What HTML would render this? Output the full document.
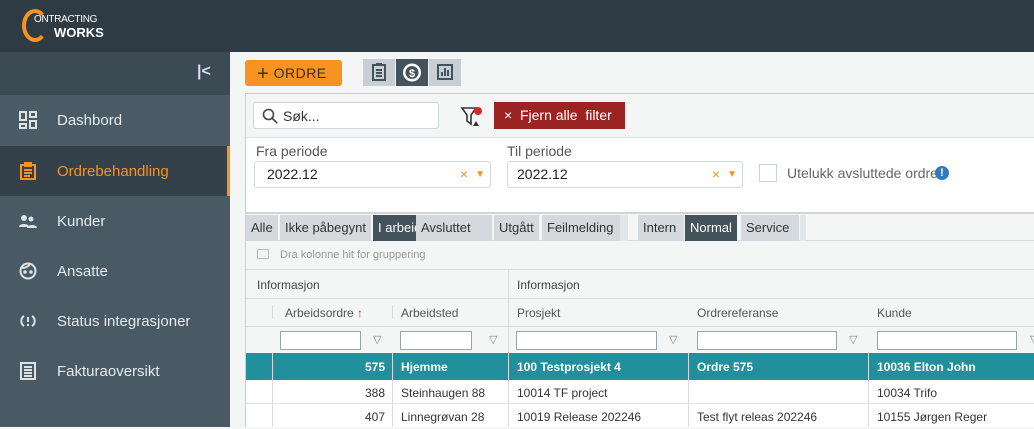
<!DOCTYPE html><html><head><style>
*{box-sizing:border-box;margin:0;padding:0}
body{width:1034px;height:427px;overflow:hidden;font-family:"Liberation Sans",sans-serif;background:#f4f5f5;position:relative;font-size:13px;color:#333}
.a{position:absolute}
.top{left:0;top:0;width:1034px;height:52px;background:#2e3a44}
.side{left:0;top:52px;width:230px;height:375px;background:#495a64}
.nav{left:0;width:230px;height:50px;color:#e6eaec;font-size:15px;display:flex;align-items:center;padding-left:57px}
.ic{position:absolute;left:19px;top:16px;width:18px;height:18px}
.btn{background:#c8cfd4;width:32px;height:27px;top:59px}
.tab{top:215px;height:26px;background:#d3d9dd;color:#333;font-size:13px;line-height:26px;padding:0 5px}
.tab.on{background:#44525c;color:#fff}
.cell{position:absolute;font-size:12px;line-height:24px;white-space:nowrap}
.vl{position:absolute;width:1px;background:#d8dcdf}
.fi{position:absolute;top:331px;height:19px;border:1px solid #9aa3a8;background:#fff}
.fa{position:absolute;top:333px;color:#888;font-size:11px}
</style></head><body>
<div class="a top"></div>
<div class="a" style="left:22px;top:9px;width:26px;height:33px;border:4px solid #f7931e;border-right-color:transparent;border-radius:50%"></div>
<div class="a" style="left:34px;top:14px;color:#fff;font-size:10px;letter-spacing:-.3px">ONTRACTING</div>
<div class="a" style="left:54px;top:25px;color:#fff;font-size:13px;font-weight:bold">WORKS</div>
<div class="a side"></div>
<div class="a" style="left:0;top:52px;width:230px;height:43px;background:#3c4a53"></div>
<div class="a" style="left:197px;top:63px;color:#dde;font-size:16px;font-weight:bold">|&lt;</div>
<div class="a nav" style="top:95px;background:#4b5b65"><svg class="ic" viewBox="0 0 18 18" fill="none" stroke="#dde2e5" stroke-width="2"><rect x="1" y="1" width="6" height="8"/><rect x="11" y="1" width="6" height="5"/><rect x="1" y="13" width="6" height="4"/><rect x="11" y="10" width="6" height="7"/></svg>Dashbord</div>
<div class="a nav" style="top:146px;background:#35414a;color:#f7931e;border-right:3px solid #f7931e"><svg class="ic" viewBox="0 0 18 18" fill="none" stroke="#f7931e" stroke-width="2"><rect x="2" y="3" width="14" height="14"/><rect x="6" y="1" width="6" height="3" fill="#f7931e"/><path d="M5 8h8M5 11h8M5 14h6"/></svg>Ordrebehandling</div>
<div class="a nav" style="top:196px"><svg class="ic" viewBox="0 0 18 18" fill="#dde2e5"><circle cx="5" cy="6" r="3"/><circle cx="12" cy="7" r="2.5"/><path d="M0 15c0-4 10-4 10 0zM8 16c0-4 10-4 10 0z"/></svg>Kunder</div>
<div class="a nav" style="top:246px"><svg class="ic" viewBox="0 0 18 18" fill="none" stroke="#dde2e5" stroke-width="2"><circle cx="9" cy="9" r="7.5"/><circle cx="6" cy="10" r=".8"/><circle cx="12" cy="10" r=".8"/><path d="M3 6c3 0 6-1 8-4"/></svg>Ansatte</div>
<div class="a nav" style="top:296px"><svg class="ic" viewBox="0 0 18 18" fill="none" stroke="#dde2e5" stroke-width="2"><path d="M5 4a6 6 0 0 0 0 10M13 4a6 6 0 0 1 0 10M9 5v5M9 12v2"/></svg>Status integrasjoner</div>
<div class="a nav" style="top:346px"><svg class="ic" viewBox="0 0 18 18" fill="none" stroke="#dde2e5" stroke-width="2"><rect x="2" y="1" width="14" height="16"/><path d="M5 5h8M5 8h8M5 11h8M5 14h8"/></svg>Fakturaoversikt</div>

<div class="a" style="left:245px;top:60px;width:97px;height:26px;background:#f7931e;border-radius:3px;color:#333;font-size:14px;line-height:26px;padding-left:12px;letter-spacing:.5px"><b style="font-size:20px;font-weight:normal;vertical-align:-2px">+</b> ORDRE</div>
<div class="a btn" style="left:363px"><svg width="32" height="27" viewBox="0 0 32 27" fill="none" stroke="#44525c" stroke-width="2"><rect x="10" y="6" width="12" height="15"/><path d="M13 11h6M13 14h6M13 17h6M13 5h6"/></svg></div>
<div class="a btn" style="left:396px;background:#44525c"><svg width="32" height="27" viewBox="0 0 32 27"><circle cx="16" cy="13.5" r="9" fill="#fff"/><circle cx="16" cy="13.5" r="6.5" fill="#44525c"/><text x="16" y="18" fill="#fff" font-size="11" text-anchor="middle" font-weight="bold" font-family="Liberation Sans">$</text></svg></div>
<div class="a btn" style="left:429px"><svg width="32" height="27" viewBox="0 0 32 27" fill="none" stroke="#44525c" stroke-width="2"><rect x="9" y="6" width="14" height="14"/><path d="M13 17v-4M16 17v-8M19 17v-6"/></svg></div>

<div class="a" style="left:245px;top:93px;width:789px;height:334px;border-left:1px solid #c9ced2;border-top:1px solid #c9ced2"></div>
<div class="a" style="left:246px;top:137px;width:788px;height:77px;background:#fff;border-top:1px solid #dfe3e5;border-bottom:2px solid #d0d5d8"></div>
<div class="a" style="left:253px;top:102px;width:186px;height:27px;background:#fff;border:1px solid #cfd5d8;border-radius:3px"><svg class="a" style="left:8px;top:5px" width="16" height="16" viewBox="0 0 16 16" fill="none" stroke="#444" stroke-width="1.6"><circle cx="6.5" cy="6.5" r="5"/><path d="M10 10l5 5"/></svg><span class="a" style="left:29px;top:5px;font-size:14px">Søk...</span></div>
<svg class="a" style="left:460px;top:105px" width="24" height="24" viewBox="0 0 24 24"><path d="M2 3h14l-5 7v9l-4-3v-6z" fill="none" stroke="#333" stroke-width="1.6"/><circle cx="18" cy="6" r="4" fill="#d62828"/><path d="M13 21l3-5 3 5z" fill="#333"/></svg>
<div class="a" style="left:494px;top:102px;width:131px;height:27px;background:#9b2423;color:#fff;font-size:14px;line-height:27px;padding-left:10px">×&nbsp; Fjern alle&nbsp; filter</div>

<div class="a" style="left:256px;top:143px;color:#555;font-size:14px">Fra periode</div>
<div class="a" style="left:254px;top:161px;width:237px;height:27px;border:1px solid #d5dadd;border-radius:3px;background:#fff;font-size:14px;line-height:25px;padding-left:12px;color:#222">2022.12<span class="a" style="right:22px;top:0;color:#f7931e">×</span><span class="a" style="right:5px;top:0;color:#f7931e;font-size:10px">▼</span></div>
<div class="a" style="left:507px;top:143px;color:#555;font-size:14px">Til periode</div>
<div class="a" style="left:507px;top:161px;width:236px;height:27px;border:1px solid #d5dadd;border-radius:3px;background:#fff;font-size:14px;line-height:25px;padding-left:9px;color:#222">2022.12<span class="a" style="right:22px;top:0;color:#f7931e">×</span><span class="a" style="right:5px;top:0;color:#f7931e;font-size:10px">▼</span></div>
<div class="a" style="left:759px;top:164px;width:18px;height:18px;border:1px solid #ccd1d4;background:#fff"></div>
<div class="a" style="left:787px;top:165px;color:#666;font-size:14px">Utelukk avsluttede ordre</div>
<div class="a" style="left:935px;top:166px;width:14px;height:14px;border-radius:50%;background:#2f7bbf;color:#fff;font-size:11px;text-align:center;line-height:14px;font-weight:bold">!</div>

<div class="a" style="left:246px;top:215px;width:788px;height:26px;background:#f4f5f5;border-bottom:1px solid #d8dcdf"></div>
<div class="a tab" style="left:246px">Alle</div>
<div class="a tab" style="left:280px">Ikke påbegynt</div>
<div class="a tab on" style="left:373px">I arbeid</div>
<div class="a tab" style="left:416px;width:76px">Avsluttet</div>
<div class="a tab" style="left:494px">Utgått</div>
<div class="a tab" style="left:542px;width:78px">Feilmelding</div>
<div class="a tab" style="left:620px;width:8px;background:#e2e6e8;padding:0"></div>
<div class="a tab" style="left:638px;width:46px">Intern</div>
<div class="a tab on" style="left:685px">Normal</div>
<div class="a tab" style="left:741px;width:58px">Service</div>
<div class="a tab" style="left:800px;width:6px;background:#e2e6e8;padding:0"></div>

<div class="a" style="left:257px;top:249px;width:12px;height:10px;border:1px solid #bbb"></div>
<div class="a" style="left:280px;top:249px;color:#999;font-size:11px">Dra kolonne hit for gruppering</div>
<div class="a" style="left:246px;top:269px;width:788px;height:1px;background:#d8dcdf"></div>
<div class="a" style="left:257px;top:278px;font-size:12px;color:#444">Informasjon</div>
<div class="a" style="left:517px;top:278px;font-size:12px;color:#444">Informasjon</div>
<div class="a" style="left:246px;top:298px;width:788px;height:1px;background:#d8dcdf"></div>
<div class="vl" style="left:508px;top:269px;height:158px"></div>
<div class="a" style="left:285px;top:306px;font-size:12px;color:#555">Arbeidsordre <span style="color:#c33">↑</span></div>
<div class="a" style="left:401px;top:306px;font-size:12px;color:#555">Arbeidsted</div>
<div class="a" style="left:517px;top:306px;font-size:12px;color:#555">Prosjekt</div>
<div class="a" style="left:697px;top:306px;font-size:12px;color:#555">Ordrereferanse</div>
<div class="a" style="left:877px;top:306px;font-size:12px;color:#555">Kunde</div>
<div class="a" style="left:246px;top:326px;width:788px;height:1px;background:#d8dcdf"></div>
<div class="vl" style="left:272px;top:305px;height:14px"></div><div class="vl" style="left:392px;top:305px;height:14px"></div>
<div class="fi" style="left:280px;width:81px"></div><div class="fa" style="left:373px">▽</div>
<div class="fi" style="left:400px;width:72px"></div><div class="fa" style="left:489px">▽</div>
<div class="fi" style="left:516px;width:141px"></div><div class="fa" style="left:669px">▽</div>
<div class="fi" style="left:697px;width:140px"></div><div class="fa" style="left:849px">▽</div>
<div class="fi" style="left:877px;width:140px"></div><div class="fa" style="left:1030px">▽</div>
<div class="a" style="left:246px;top:353px;width:788px;height:27px;background:#21909c"></div>
<div class="a" style="left:246px;top:380px;width:788px;height:47px;background:#fff"></div>
<div class="a" style="left:246px;top:403px;width:788px;height:1px;background:#e2e5e7"></div>
<div class="vl" style="left:272px;top:353px;height:74px"></div><div class="vl" style="left:392px;top:353px;height:74px"></div><div class="vl" style="left:508px;top:353px;height:74px"></div><div class="vl" style="left:688px;top:353px;height:74px"></div><div class="vl" style="left:868px;top:353px;height:74px"></div>
<div style="color:#fff;font-weight:bold">
<div class="cell" style="left:272px;width:113px;text-align:right;top:355px">575</div>
<div class="cell" style="left:401px;top:355px">Hjemme</div>
<div class="cell" style="left:517px;top:355px">100 Testprosjekt 4</div>
<div class="cell" style="left:697px;top:355px">Ordre 575</div>
<div class="cell" style="left:877px;top:355px">10036 Elton John</div></div>
<div class="cell" style="left:272px;width:113px;text-align:right;top:381px">388</div>
<div class="cell" style="left:401px;top:381px">Steinhaugen 88</div>
<div class="cell" style="left:517px;top:381px">10014 TF project</div>
<div class="cell" style="left:877px;top:381px">10034 Trifo</div>
<div class="cell" style="left:272px;width:113px;text-align:right;top:405px">407</div>
<div class="cell" style="left:401px;top:405px">Linnegrøvan 28</div>
<div class="cell" style="left:517px;top:405px">10019 Release 202246</div>
<div class="cell" style="left:697px;top:405px">Test flyt releas 202246</div>
<div class="cell" style="left:877px;top:405px">10155 Jørgen Reger</div>
</body></html>
